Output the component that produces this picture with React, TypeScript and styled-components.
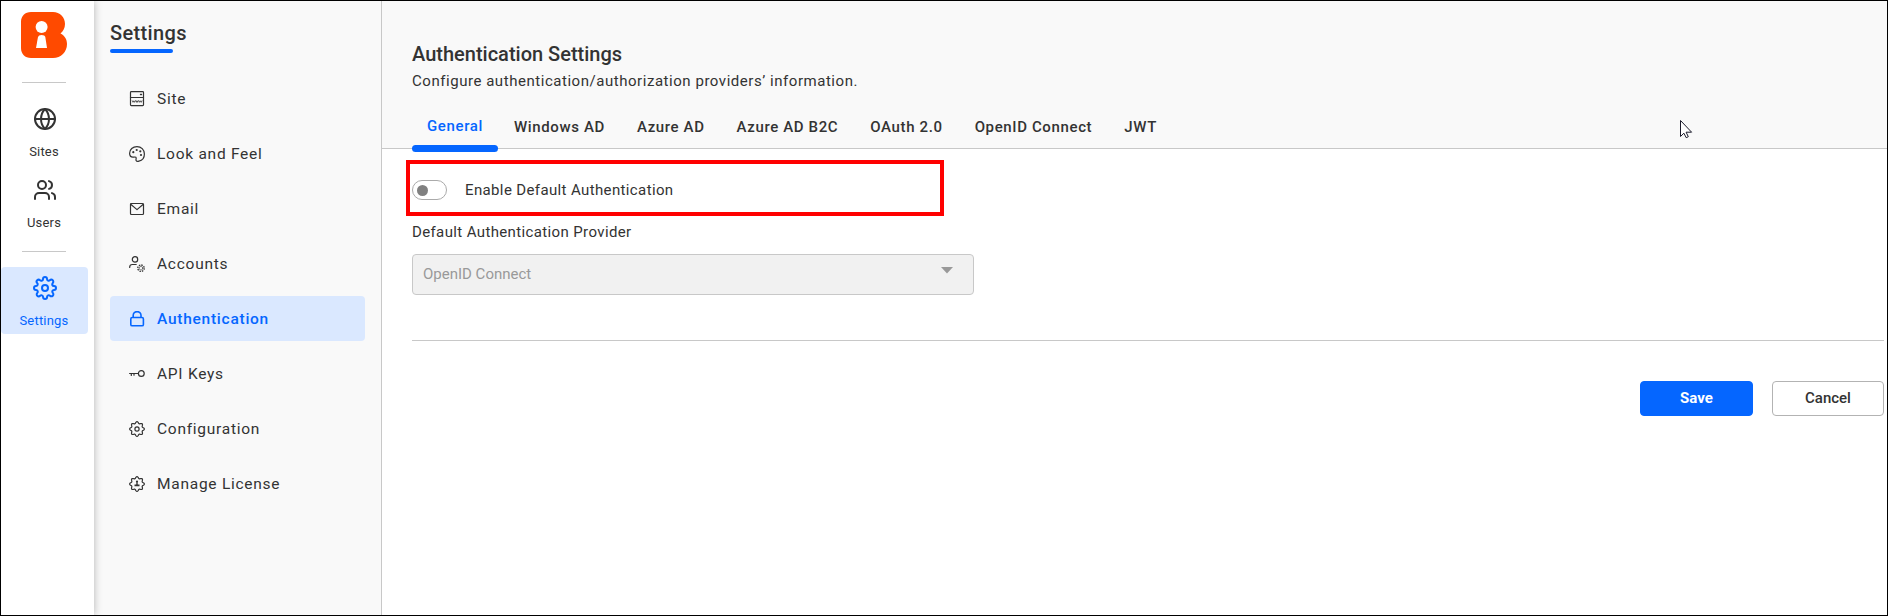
import React from "react";
import styled, { createGlobalStyle, css } from "styled-components";
import { Globe, Users } from "lucide-react";

const GlobalStyle = createGlobalStyle`
  *, *::before, *::after { box-sizing: border-box; }
  body { margin: 0; font-family: Roboto, "Liberation Sans", sans-serif; color: #333; }
  button { font-family: inherit; padding: 0; }
`;

const Frame = styled.div`
  position: relative;
  display: flex;
  width: 1888px;
  height: 616px;
  border: 1px solid #000;
  background: #fff;
  overflow: hidden;
`;

const Rail = styled.nav`
  display: flex;
  flex-direction: column;
  width: 93px;
  padding-top: 11px;
  background: #fff;
  box-shadow: 0 0 8px rgba(0, 0, 0, 0.28);
  z-index: 1;
`;

const LogoBox = styled.div`
  height: 46px;
  margin-left: 20px;
  svg { display: block; }
`;

const RailDivider = styled.div<{ $top: number }>`
  width: 44px;
  height: 1px;
  margin: ${(p) => p.$top}px 0 0 21px;
  background: #c8c8c8;
`;

const RailItem = styled.a<{ $active?: boolean; $top: number }>`
  display: flex;
  flex-direction: column;
  align-items: center;
  width: 87px;
  height: 67px;
  margin-top: ${(p) => p.$top}px;
  padding-top: 9px;
  border-radius: 4px;
  font-size: 13px;
  line-height: 16px;
  letter-spacing: 0.2px;
  color: ${(p) => (p.$active ? "#0566ff" : "#333")};
  background: ${(p) => (p.$active ? "#dae8ff" : "transparent")};
  svg { display: block; margin-bottom: 13px; }
`;

const RailText = styled.span`
  padding-right: 1px;
`;

const Sidebar = styled.aside`
  width: 288px;
  padding: 20px 0 0 16px;
  background: #f9f9f9;
  border-right: 1px solid #c8c8c8;
`;

const SidebarTitle = styled.h2`
  display: flex;
  flex-direction: column;
  gap: 4px;
  margin: 0 0 23px;
  font-size: 20px;
  font-weight: 500;
  line-height: 24px;
  letter-spacing: 0.35px;
  &::after {
    content: "";
    width: 63px;
    height: 4px;
    border-radius: 2px;
    background: #0566ff;
  }
`;

const MenuList = styled.div`
  display: flex;
  flex-direction: column;
  gap: 10px;
`;

const MenuItem = styled.a<{ $active?: boolean }>`
  display: flex;
  align-items: center;
  gap: 12px;
  width: 255px;
  height: 45px;
  padding-left: 19px;
  border-radius: 4px;
  font-size: 15.5px;
  letter-spacing: 0.74px;
  ${(p) =>
    p.$active &&
    css`
      background: #dae8ff;
      color: #0566ff;
      font-weight: 500;
    `}
`;

const Main = styled.main`
  flex: 1;
  min-width: 0;
`;

const Header = styled.header`
  height: 148px;
  padding: 41px 0 0 30px;
  background: #f9f9f9;
  border-bottom: 1px solid #c8c8c8;
`;

const Title = styled.h1`
  margin: 0;
  font-size: 20px;
  font-weight: 500;
  line-height: 24px;
`;

const Subtitle = styled.p`
  margin: 4px 0 0;
  font-size: 15px;
  line-height: 22px;
  letter-spacing: 0.54px;
`;

const Tabs = styled.div`
  display: flex;
  margin-top: 19px;
`;

const Tab = styled.a<{ $active?: boolean }>`
  display: flex;
  flex-direction: column;
  height: 41px;
  padding: 6px 16px 0;
  font-size: 15px;
  font-weight: 500;
  line-height: 20px;
  letter-spacing: 0.63px;
  white-space: nowrap;
  ${(p) =>
    p.$active &&
    css`
      width: 86px;
      padding: 5px 0 0;
      color: #0566ff;
      text-indent: 15px;
      &::after {
        content: "";
        flex: none;
        height: 7px;
        margin-top: 9px;
        border-radius: 4px;
        background: #0566ff;
      }
    `}
`;

const Body = styled.section`
  display: flex;
  flex-direction: column;
  padding: 11px 3px 0 24px;
`;

const Highlight = styled.div`
  display: flex;
  align-items: center;
  gap: 18px;
  width: 538px;
  height: 56px;
  padding: 4px 0 0 2px;
  border: 4px solid #f00;
`;

const Toggle = styled.span`
  display: flex;
  align-items: center;
  width: 35px;
  height: 20px;
  padding-left: 4px;
  border: 1px solid #aaa;
  border-radius: 10px;
  &::after {
    content: "";
    width: 11px;
    height: 11px;
    border-radius: 50%;
    background: #808080;
  }
`;

const Label = styled.label`
  font-size: 15px;
  line-height: 20px;
  letter-spacing: 0.37px;
`;

const Field = styled.div`
  display: flex;
  flex-direction: column;
  gap: 12px;
  margin: 6px 0 0 6px;
`;

const Select = styled.div`
  display: flex;
  justify-content: space-between;
  width: 562px;
  height: 41px;
  padding: 9px 20px 0 10px;
  border: 1px solid #c8c8c8;
  border-radius: 4px;
  background: #f1f1f1;
  color: #999;
  font-size: 15px;
  line-height: 20px;
  svg { margin-top: 3px; }
`;

const Actions = styled.footer`
  display: flex;
  justify-content: flex-end;
  gap: 19px;
  margin: 45px 0 0 6px;
  padding-top: 40px;
  border-top: 1px solid #c8c8c8;
`;

const Button = styled.button<{ $primary?: boolean }>`
  width: ${(p) => (p.$primary ? 113 : 112)}px;
  height: 35px;
  padding-bottom: 2px;
  border: 1px solid ${(p) => (p.$primary ? "#0566ff" : "#b3b3b3")};
  border-radius: 4px;
  background: ${(p) => (p.$primary ? "#0566ff" : "#fff")};
  color: ${(p) => (p.$primary ? "#fff" : "#333")};
  font-size: 15px;
  font-weight: ${(p) => (p.$primary ? 700 : 500)};
`;

const Pointer = styled.svg`
  position: absolute;
  left: 1678px;
  top: 117px;
`;

const Logo = () => (
  <svg width="46" height="46" viewBox="0 0 46 46">
    <path fill="#ff4a00" d="M10 0H32C39 0 44 5 44 12C44 16 42 19.500 39.500 21.500C43.500 23.500 46 27 46 32C46 40 40 46 32 46H10C4 46 0 42 0 36V10C0 4 4 0 10 0Z" />
    <circle cx="20.600" cy="15" r="6" fill="#fff" />
    <path fill="#fff" d="M17 25Q17.500 23 20.500 23Q23.800 23 24.300 25L26 36H15Z" />
  </svg>
);

const Icon = ({ children }: { children: React.ReactNode }) => (
  <svg width="16" height="16" viewBox="0 0 16 16" fill="none" stroke="currentColor" strokeWidth="1.2" strokeLinecap="round" strokeLinejoin="round">
    {children}
  </svg>
);

const GearIcon = () => (
  <svg width="24" height="24" viewBox="0 0 24 24" fill="none" stroke="currentColor" strokeWidth="2" strokeLinecap="round" strokeLinejoin="round">
    <path d="M19.400 15a1.650 1.650 0 0 0 .33 1.820l.06.06a2 2 0 1 1-2.830 2.830l-.06-.06a1.650 1.650 0 0 0-1.820-.33 1.650 1.650 0 0 0-1 1.510V21a2 2 0 0 1-4 0v-.09A1.650 1.650 0 0 0 9 19.400a1.650 1.650 0 0 0-1.820.33l-.06.06a2 2 0 1 1-2.830-2.830l.06-.06a1.650 1.650 0 0 0 .33-1.820 1.650 1.650 0 0 0-1.510-1H3a2 2 0 0 1 0-4h.09A1.650 1.650 0 0 0 4.600 9a1.650 1.650 0 0 0-.33-1.820l-.06-.06a2 2 0 1 1 2.830-2.830l.06.06a1.650 1.650 0 0 0 1.820.33H9a1.650 1.650 0 0 0 1-1.510V3a2 2 0 0 1 4 0v.09a1.650 1.650 0 0 0 1 1.510 1.650 1.650 0 0 0 1.820-.33l.06-.06a2 2 0 1 1 2.830 2.830l-.06.06a1.650 1.650 0 0 0-.33 1.820V9a1.650 1.650 0 0 0 1.510 1H21a2 2 0 0 1 0 4h-.09a1.650 1.650 0 0 0-1.510 1z" />
    <circle cx="12" cy="12" r="3" />
  </svg>
);

// Eight rounded teeth around the centre of a 16px box.
const COG =
  "M" +
  Array.from({ length: 96 }, (_, i) => {
    const a = (i / 96) * Math.PI * 2;
    const r = 6.5 + 0.85 * Math.cos(8 * a);
    return `${(8 + r * Math.cos(a)).toFixed(2)} ${(8 + r * Math.sin(a)).toFixed(2)}`;
  }).join("L") +
  "Z";

const ConfigIcon = () => (
  <Icon>
    <path d={COG} />
    <circle cx="8" cy="8" r="2.100" />
  </Icon>
);

const LicenseIcon = () => (
  <Icon>
    <path d={COG} />
    <g fill="currentColor" stroke="none">
      <circle cx="8" cy="5.600" r="1.100" />
      <path d="M7.500 6h1l.3 2.600h1.700v1.700H5.500V8.600h1.700Z" />
    </g>
  </Icon>
);

const SiteIcon = () => (
  <Icon>
    <rect x="1.500" y=".6" width="13" height="14" rx=".8" />
    <path d="M1.500 6.500h13" />
    <path d="M11.500 3.500h1" strokeWidth="1.400" />
    <path strokeWidth=".8" d="M3.300 9.800l.7 1.500.8-1.500.8 1.500.7-1.500M7 9.800l.5 1.500.6-1.500.6 1.500.6-1.500M10 9.800l.7 1.500.8-1.500.8 1.500.7-1.500" />
  </Icon>
);

const PaletteIcon = () => (
  <Icon>
    <path d="M8 .6C3.800.6.600 3.500.600 7.200c0 2.700 1.500 4 3.300 4 1.300 0 2.300-.5 3 .1.800.8-.3 2 .2 3.100.4.900 1.600 1.100 2.800.800C13.200 14.500 15.400 11.500 15.400 8 15.400 3.700 12.100.6 8 .6Z" />
    <g fill="currentColor" stroke="none">
      <circle cx="4.300" cy="6.200" r="1.100" />
      <circle cx="7.700" cy="4" r="1.100" />
      <circle cx="11.300" cy="5.300" r="1.100" />
      <circle cx="12" cy="9" r="1.100" />
    </g>
  </Icon>
);

const MailIcon = () => (
  <Icon>
    <rect x="1.500" y="2.500" width="13" height="11" rx="1" />
    <path d="M1.700 3.200L8 8.600l6.300-5.400" />
  </Icon>
);

const AccountsIcon = () => (
  <Icon>
    <circle cx="6" cy="3.400" r="2.700" />
    <path d="M.7 11.500v-.6c0-1.500 1-2.400 2.500-2.400h4" />
    <circle cx="12" cy="12.200" r="3.200" strokeWidth="1.300" strokeDasharray="1.500 1" strokeLinecap="butt" />
    <circle cx="12" cy="12.200" r="1.800" strokeWidth=".6" />
  </Icon>
);

const LockIcon = () => (
  <svg width="16" height="16" viewBox="0 0 16 16" fill="none" stroke="currentColor" strokeWidth="1.600" strokeLinejoin="round">
    <rect x="1.800" y="6.500" width="12.600" height="8.300" rx="1.400" />
    <path d="M4.200 6.300V4.300a3.900 3.700 0 0 1 7.800 0v2" />
  </svg>
);

const KeyIcon = () => (
  <Icon>
    <circle cx="12.300" cy="7.500" r="2.900" />
    <path d="M9.300 7.500H.6M2.300 7.500v2M5 7.500v1.700" />
  </Icon>
);

const menu = [
  { name: "Site", icon: <SiteIcon /> },
  { name: "Look and Feel", icon: <PaletteIcon /> },
  { name: "Email", icon: <MailIcon /> },
  { name: "Accounts", icon: <AccountsIcon /> },
  { name: "Authentication", icon: <LockIcon />, active: true },
  { name: "API Keys", icon: <KeyIcon /> },
  { name: "Configuration", icon: <ConfigIcon /> },
  { name: "Manage License", icon: <LicenseIcon /> },
];

const tabs = ["General", "Windows AD", "Azure AD", "Azure AD B2C", "OAuth 2.0", "OpenID Connect", "JWT"];

export default function App() {
  return (
    <>
      <GlobalStyle />
      <Frame>
        <Rail>
          <LogoBox><Logo /></LogoBox>
          <RailDivider $top={24} />
          <RailItem $top={15}><Globe size={24} /><RailText>Sites</RailText></RailItem>
          <RailItem $top={4}><Users size={24} /><RailText>Users</RailText></RailItem>
          <RailDivider $top={15} />
          <RailItem $top={15} $active><GearIcon /><RailText>Settings</RailText></RailItem>
        </Rail>
        <Sidebar>
          <SidebarTitle>Settings</SidebarTitle>
          <MenuList>
            {menu.map((m) => (
              <MenuItem key={m.name} $active={m.active}>{m.icon}{m.name}</MenuItem>
            ))}
          </MenuList>
        </Sidebar>
        <Main>
          <Header>
            <Title>Authentication Settings</Title>
            <Subtitle>Configure authentication/authorization providers’ information.</Subtitle>
            <Tabs>
              {tabs.map((t, i) => <Tab key={t} $active={i === 0}>{t}</Tab>)}
            </Tabs>
          </Header>
          <Body>
            <Highlight>
              <Toggle />
              <Label>Enable Default Authentication</Label>
            </Highlight>
            <Field>
              <Label>Default Authentication Provider</Label>
              <Select>
                OpenID Connect
                <svg width="12" height="7" viewBox="0 0 12 7"><path d="M0 0h12L6 6.500Z" fill="#999" /></svg>
              </Select>
            </Field>
            <Actions>
              <Button $primary>Save</Button>
              <Button>Cancel</Button>
            </Actions>
          </Body>
        </Main>
        <Pointer width="14" height="21" viewBox="0 0 14 21">
          <path d="M1.500 2.500v16l3.400-3.300 2.300 4.500 2.100-1-2.200-4.500h5.500Z" fill="#fff" stroke="#1a1a2a" strokeWidth="1" />
        </Pointer>
      </Frame>
    </>
  );
}
